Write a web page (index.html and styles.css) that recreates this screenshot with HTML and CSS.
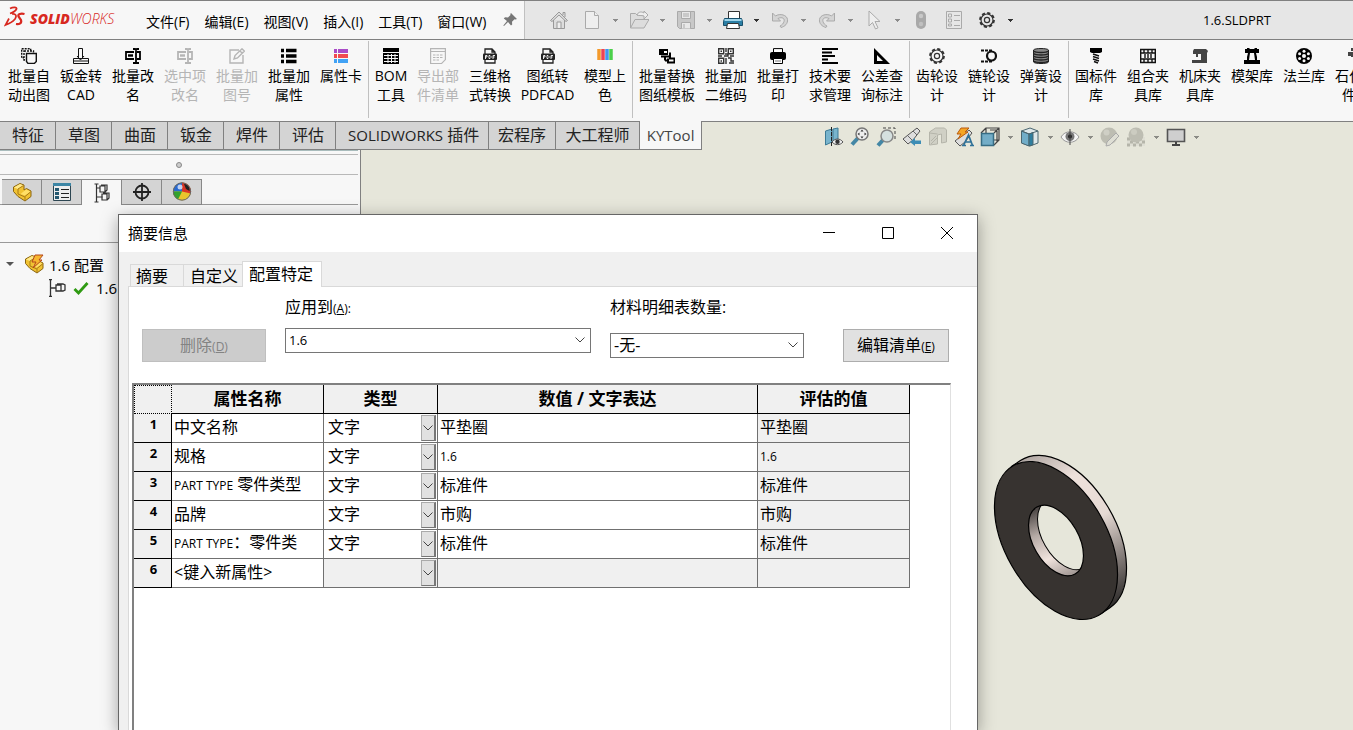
FILE: index.html
```html
<!DOCTYPE html>
<html lang="zh-CN">
  <head>
    <meta charset="UTF-8" />
    <meta name="viewport" content="width=device-width, initial-scale=1.0" />
    <title>1.6.SLDPRT</title>
    <link rel="stylesheet" href="styles.css">
  </head>
  <body>
    <svg class="sprite" aria-hidden="true">
      <symbol id="chevron" viewBox="0 0 10 6"><path d="M.5.5 5 5 9.5.5" fill="none" stroke="#444" /></symbol>
      <symbol id="rename" viewBox="0 0 16 16">
        <path d="M9 4H1v7h8M12 4h3v7h-3" fill="none" stroke="currentColor" stroke-width="1.8" />
        <path d="M3 7.500h5" stroke="currentColor" stroke-width="2.400" />
        <path d="M8 1h2l1 1 1-1h2M11 1v14M8 15h2l1-1 1 1h2" fill="none" stroke="currentColor" stroke-width="1.800" />
      </symbol>
      <symbol id="pdf" viewBox="0 0 16 16">
        <path d="M3 6V1h7l3 3v2M3 11v4h10v-4M10 1v3h3" fill="none" stroke="#222" stroke-width="1.3" />
        <rect x="1" y="5.500" width="14" height="6.500" rx="1" fill="#222" />
        <path d="M3.500 11V7.500h1.500v1.500H3.500M7 7.500v3h1l1-1v-1l-1-1zM11 11V7.500h2M11 9h1.500" fill="none" stroke="#fff" stroke-width=".9" />
      </symbol>
      <symbol id="gear" viewBox="0 0 16 16">
        <g fill="none" stroke="currentColor">
          <circle cx="8" cy="8" r="6" stroke-width="1.200" />
          <circle cx="8" cy="8" r="7" stroke-width="1.800" stroke-dasharray="3.200 2.298" />
          <circle cx="8" cy="8" r="2.600" stroke-width="1.200" />
        </g>
      </symbol>
      <symbol id="part" viewBox="0 0 20 20">
        <path d="M1.500 5 8 1.500l4 1.500v5l2.500-1.500L19 9v5.500L13 19l-7-4.500-4.500-5z" fill="#f1c232" stroke="#8a6510" />
        <path d="M2 5.500 6 7l5.500-3.500L8 2z" fill="#ffe98a" />
        <path d="M8.500 12 14 7.500l4.500 2-5.500 4z" fill="#ffdf66" />
        <path d="M6 7v5l7 3v3.500M6 7l5.500-3.500M13 14.500l5.500-4.500" fill="none" stroke="#a87b15" />
      </symbol>
    </svg>

    <header class="titlebar">
      <div class="titlebar-left">
        <div class="logo">
          <svg width="22" height="22" viewBox="0 0 22 22" fill="none" stroke="#d8281f" stroke-width="1.700">
            <path d="M6 2.500c3-1.500 7.500-1.500 6.500.5C11.500 5 9 6.500 6 7.500" />
            <path d="M8 8c4-.5 5 2 3 5-2 2.500-5 4.500-9.500 6L5 12.500" />
            <path d="M20.500 8c-3.500-1-7 0-6 2.500l2.500 3.500c1 3-1.500 4.500-5 4" stroke-width="2.200" />
          </svg>
          <span class="logo-text"><b>SOLID</b>WORKS</span>
        </div>
        <nav class="menu">
          <a href="#">文件(F)</a>
          <a href="#">编辑(E)</a>
          <a href="#">视图(V)</a>
          <a href="#">插入(I)</a>
          <a href="#">工具(T)</a>
          <a href="#">窗口(W)</a>
        </nav>
        <svg class="pin" width="14" height="14" viewBox="0 0 14 14"><path d="M8 0l6 6-1.500.5-1-.3-2.500 2.500.2 2.800-1.200 1-3-3.500L1 13l-.7-.6L4 8 .8 5.500 2 4.300l3 .2L7.500 2 7.300 1z" fill="#777" /></svg>
      </div>
      <div class="quick">
        <button class="q" aria-label="主页"><svg width="20" height="20" viewBox="0 0 20 20" fill="#ddd" stroke="#999"><path d="M4.500 10v8.500h11V10M1.500 10.500 10 2l8.500 8.500-1.500 1L10 5 3 11.500zM14 5V2.500h2V7" /><path d="M8 18v-6h4v6" fill="#eee" /></svg></button>
        <button class="q" aria-label="新建"><svg width="20" height="20" viewBox="0 0 20 20" fill="#eee" stroke="#aaa"><path d="M3.500 1.500h9l4 4v13h-13z" /><path d="M12.500 1.500v4h4" /></svg></button>
        <i class="caret pale"></i>
        <button class="q" aria-label="打开"><svg width="20" height="20" viewBox="0 0 20 20" fill="#ddd" stroke="#aaa"><path d="M1.500 18V3.500h5l2 2h7V9" /><path d="M1.500 18 6 9.500h14L15 18z" /><path d="M8 5c1-3 4-4 7-2V1l4 4-4 4V6c-3-1-5 0-7-1z" fill="#eee" /></svg></button>
        <i class="caret pale"></i>
        <button class="q" aria-label="保存"><svg width="20" height="20" viewBox="0 0 20 20" fill="#c8c8c8" stroke="#aaa"><path d="M1.500 1.500h17v17h-15l-2-2z" /><path d="M5.500 1.500h9v7h-9zM5.500 18.500v-6h9v6" fill="#e8e8e8" /><path d="M7 4h6M7 6h6M8 14v4" /></svg></button>
        <i class="caret pale"></i>
        <button class="q" aria-label="打印"><svg width="20" height="20" viewBox="0 0 20 20" stroke="#333"><path d="M5.500 9V1.500h11V9" fill="#fff" /><path d="M1.500 8.500h17l1 3v4h-19v-4z" fill="#2b7fa5" stroke="#174f6b" /><path d="M1.500 9h17v2h-17z" fill="#9ed4ea" stroke="none" /><path d="M4.500 13.500h11l1 5h-13z" fill="#fff" /></svg></button>
        <i class="caret"></i>
        <button class="q" aria-label="撤销"><svg width="20" height="20" viewBox="0 0 20 20" fill="#d4d4d4" stroke="#aaa"><path d="M2.500 3v8h8L8 8.500c4-2 7 0 6 3-.5 2-2 3.500-4 4.500l1 1.500c4-1 7-4 6.500-8C17 5 10 3 5.500 6z" /></svg></button>
        <i class="caret pale"></i>
        <button class="q" aria-label="重做"><svg width="20" height="20" viewBox="0 0 20 20" fill="#d4d4d4" stroke="#aaa"><path d="M17.500 3v8h-8L12 8.500c-4-2-7 0-6 3 .5 2 2 3.500 4 4.500l-1 1.500c-4-1-7-4-6.500-8C3 5 10 3 14.500 6z" /></svg></button>
        <i class="caret pale"></i>
        <button class="q" aria-label="选择"><svg width="20" height="20" viewBox="0 0 20 20" fill="#eee" stroke="#aaa"><path d="M5 1v15l3.500-3.500L11.500 19l2.500-1.200-3-6.300h5z" /></svg></button>
        <i class="caret pale"></i>
        <button class="q" aria-label="重建"><svg width="20" height="20" viewBox="0 0 20 20"><rect x="5" y="1" width="10" height="18" rx="5" fill="#a9a9a9" /><circle cx="10" cy="6" r="2.200" fill="#c8c8c8" /><circle cx="10" cy="14" r="2.200" fill="#c0c0c0" /></svg></button>
        <button class="q" aria-label="文件属性"><svg width="20" height="20" viewBox="0 0 20 20" fill="none" stroke="#aaa"><path d="M2.500 1.500h15v17h-15zM4.500 4h3v3h-3zM4.500 9h3v3h-3zM4.500 14h3v2h-3zM10 5.500h6M10 10.500h6M10 15.500h6" /></svg></button>
        <button class="q" aria-label="选项"><svg class="dark" width="16" height="16"><use href="#gear" /></svg></button>
        <i class="caret"></i>
      </div>
      <div class="doc-name">1.6.SLDPRT</div>
    </header>

    <section class="ribbon">
      <button class="tool"><svg width="16" height="16" viewBox="0 0 16 16" fill="#f7f7f7" stroke="#111" stroke-width="1.400"><path d="M.7.7h9v9h-9z" stroke-dasharray="2 1" /><path d="M3 3h9.500v9H3z" stroke-dasharray="2 1" /><path d="M5.500 5.500h9.800v8l-2 2H7l-1.500-2z" /></svg>批量自<br>动出图</button>
      <button class="tool"><svg width="16" height="16" viewBox="0 0 16 16" fill="none" stroke="#111"><path d="M5.500 10V.5h4V10M.5 10.500h15v5H.5zM0 13h16" /><path d="M4 8l3.500 4L11 8" /></svg>钣金转<br>CAD</button>
      <button class="tool"><svg width="16" height="16"><use href="#rename" /></svg>批量改<br>名</button>
      <button class="tool" disabled><svg width="16" height="16"><use href="#rename" /></svg>选中项<br>改名</button>
      <button class="tool" disabled><svg width="16" height="16" viewBox="0 0 16 16" fill="none" stroke="#b5b5b5" stroke-width="1.400"><path d="M10 2H1v13h13V7" /><path d="M5 11l1-3.500L13 .8l2.300 2.300L8.500 10zM11 3l2 2" /></svg>批量加<br>图号</button>
      <button class="tool"><svg width="16" height="16" viewBox="0 0 16 16" stroke="#000" stroke-width="3.400"><path d="M0 2.500h3M0 8h3M0 13.500h3M5 2.500h10.500M5 8h10.500M5 13.500h10.500" /></svg>批量加<br>属性</button>
      <button class="tool"><svg width="16" height="16" viewBox="0 0 16 16" stroke-width="4"><path d="M1 3h3M5 3h10" stroke="#a94bc8" /><path d="M1 8h3M5 8h10" stroke="#f04a50" /><path d="M1 13h3M5 13h10" stroke="#41a2f5" /></svg>属性卡</button>
      <span class="sep"></span>
      <button class="tool narrow"><svg width="16" height="16" viewBox="0 0 16 16"><path d="M0 0h16v4H0zM0 5h16v11H0z" /><path d="M1 7.500h14M1 10.500h14M1 13.500h14M5 6v9M8.500 6v9M12 6v9" stroke="#f7f7f7" /></svg>BOM<br>工具</button>
      <button class="tool" disabled><svg width="16" height="16" viewBox="0 0 16 16" fill="none" stroke="#b5b5b5" stroke-width="1.200"><path d="M.6.6h14.800v11l-4 4H.6zM.6 3.500h14.800" /><path d="M3 7h10M3 9.500h10M3 12h7" stroke-dasharray="2.500 1" /></svg>导出部<br>件清单</button>
      <button class="tool"><svg width="16" height="16"><use href="#pdf" /></svg>三维格<br>式转换</button>
      <button class="tool wide"><svg width="16" height="16"><use href="#pdf" /></svg>图纸转<br>PDFCAD</button>
      <button class="tool"><svg width="16" height="16" viewBox="0 0 16 16" stroke-width="3.500"><path d="M2 1v11" stroke="#f39a2b" /><path d="M6 1v11" stroke="#ee4353" /><path d="M10 1v11" stroke="#4396ee" /><path d="M14 1v11" stroke="#4bd04a" /></svg>模型上<br>色</button>
      <span class="sep"></span>
      <button class="tool wider"><svg width="16" height="16" viewBox="0 0 16 16"><path d="M0 1h9v6H0z" /><path d="M5 3h3v2H5z" fill="#fff" /><path d="M2 8.500h9v-4M6 12.500h4M6 9v3.500M10 10.500h5.500v4H9v-4" fill="none" stroke="#000" stroke-width="2" /></svg>批量替换<br>图纸模板</button>
      <button class="tool"><svg width="16" height="16" viewBox="0 0 16 16" fill="none" stroke="#333" stroke-width="1.400"><path d="M.7.7h5v5h-5zM10.300.7h5v5h-5zM.7 10.300h5v5h-5z" /><path d="M8 0v4M7 6h3v2H6M0 8h4M12 8h4M8 10v6M10 10h3v3h3M11 15h5M2.500 3.200h1.500M12 3.200h1.500M2.500 13h1.500" /></svg>批量加<br>二维码</button>
      <button class="tool"><svg width="16" height="16" viewBox="0 0 16 16"><path d="M3.500 4V.6h9V4" fill="#fff" stroke="#000" /><rect y="4" width="16" height="8" rx="2" /><path d="M3.500 10.500h9v5h-9z" fill="#fff" stroke="#000" /><path d="M5 13h6" stroke="#777" /></svg>批量打<br>印</button>
      <button class="tool"><svg width="16" height="16" viewBox="0 0 16 16" stroke="#000" stroke-width="1.800"><path d="M0 1h16M0 4.500h10M0 8h13M0 11.500h6M0 15h16" /></svg>技术要<br>求管理</button>
      <button class="tool"><svg width="16" height="16" viewBox="0 0 16 16"><path d="M0 0l16 16H0zM3 7v6h6z" fill-rule="evenodd" /></svg>公差查<br>询标注</button>
      <span class="sep"></span>
      <button class="tool"><svg class="dark" width="16" height="16"><use href="#gear" /></svg>齿轮设<br>计</button>
      <button class="tool"><svg width="16" height="16" viewBox="0 0 16 16" fill="none" stroke="#111"><circle cx="10.500" cy="8" r="4.500" stroke-width="2.200" /><path d="M0 2.500h11M0 13.500h11" stroke-width="1.800" stroke-dasharray="3 1" /></svg>链轮设<br>计</button>
      <button class="tool"><svg width="16" height="16" viewBox="0 0 16 16" fill="#888" stroke="#222"><path d="M.5 2v12c1 2 14 2 15 0V2c-1-2-14-2-15 0z" /><path d="M.5 3c2 2 13 2 15 0M.5 5.500c2 2 13 2 15 0M.5 8c2 2 13 2 15 0M.5 10.500c2 2 13 2 15 0M.5 13c2 2 13 2 15 0" stroke-width="1.300" /></svg>弹簧设<br>计</button>
      <span class="sep"></span>
      <button class="tool"><svg width="16" height="16" viewBox="0 0 16 16"><path d="M2 0h12v4l-2 1H4L2 4z" /><path d="M5 6l6 2M5 8.500l6 2M5 11l6 2M6 13.500l4 1.500" stroke="#111" stroke-width="1.500" /></svg>国标件<br>库</button>
      <button class="tool"><svg width="16" height="16" viewBox="0 0 16 16" fill="none" stroke="#111" stroke-width="1.400"><path d="M.7 1.500h14.600v13H.7zM0 5h16M0 11h16" /><path d="M4 1v4M8 1v4M12 1v4M4 11v4M8 11v4M12 11v4M5 6v4M8 6v4M11 6v4" /></svg>组合夹<br>具库</button>
      <button class="tool"><svg width="16" height="16" viewBox="0 0 16 16" fill="#444"><path d="M2 1h12l2 2-1 2v10H0v-3h9V6H6v3H4V6H1V3z" /></svg>机床夹<br>具库</button>
      <button class="tool"><svg width="16" height="16" viewBox="0 0 16 16"><path d="M3 0h2l1 1h4l1-1h2v1h2v4h-3l1 4v3h3v4H0v-4h3V9l1-4H1V1h2z" /><path d="M6 5h4l1 7H5z" fill="#f7f7f7" /></svg>模架库</button>
      <button class="tool"><svg width="16" height="16" viewBox="0 0 16 16"><circle cx="8" cy="8" r="8" /><g fill="#f7f7f7"><circle cx="8" cy="8" r="2" /><circle cx="8" cy="3.200" r="1.500" /><circle cx="8" cy="12.800" r="1.500" /><circle cx="3.600" cy="5.800" r="1.500" /><circle cx="12.400" cy="5.800" r="1.500" /><circle cx="3.600" cy="10.500" r="1.500" /><circle cx="12.400" cy="10.500" r="1.500" /></g></svg>法兰库</button>
      <button class="tool"><svg width="16" height="16" viewBox="0 0 16 16" fill="#444"><path d="M3 0h10v3h-3v2h6v7h-4v-3H3v-1H0V4h5V3H3z" /></svg>石化管<br>件库</button>
    </section>

    <div class="tabrow">
      <nav class="tabs">
        <button>特征</button><button>草图</button><button>曲面</button><button>钣金</button><button>焊件</button><button>评估</button><button class="t-solid"><span class="latin">SOLIDWORKS</span> 插件</button><button class="t-macro">宏程序</button><button class="t-master">大工程师</button><button class="active">KYTool</button>
      </nav>
      <div class="headsup">
        <button class="h" aria-label="剖面显示"><svg width="20" height="20" viewBox="0 0 20 20"><path d="M1.500 4 8 2v13l-6.500 3zM9 2l5-1v12l-5 3z" fill="#78b4cd" stroke="#3d7b96" /><path d="M7.500 0v20" stroke="#222" stroke-dasharray="4 1" /><path d="M8 15c3-4 8-4 11 0-3 3.500-8 3.500-11 0z" fill="#eee" stroke="#555" /><circle cx="13.500" cy="14.800" r="2.200" fill="#333" /></svg></button>
        <button class="h" aria-label="整屏显示全图"><svg width="20" height="20" viewBox="0 0 20 20"><path d="M8 11l-6 6.500" stroke="#4487a5" stroke-width="4" /><circle cx="12" cy="7" r="6" fill="#eee" stroke="#777" stroke-width="1.500" /><path d="M12 2.500l1.500 2h-3zM12 11.500l1.500-2h-3zM7.500 7l2-1.500v3zM16.500 7l-2-1.500v3z" fill="#333" /></svg></button>
        <button class="h" aria-label="局部放大"><svg width="20" height="20" viewBox="0 0 20 20"><path d="M7 1h12v12" fill="none" stroke="#444" stroke-dasharray="3 2" /><path d="M7 13l-5 5.500" stroke="#4487a5" stroke-width="4" /><circle cx="11" cy="9" r="6" fill="#d5e0df" stroke="#888" stroke-width="1.500" /></svg></button>
        <button class="h" aria-label="上一视图"><svg width="20" height="20" viewBox="0 0 20 20"><path d="M1 12l5-4L15 1l3 3-7 9-5 4z" fill="#ddd" stroke="#555" /><path d="M5 8l5 5M11 4l4 4" stroke="#666" /><path d="M8 15l5-4v2.500h6v3.500h-6v2z" fill="#3d8db5" /></svg></button>
        <button class="h" aria-label="剖面视图"><svg width="20" height="20" viewBox="0 0 20 20" fill="#d0d0c5" stroke="#b5b5aa"><path d="M1.500 5l6-4h9l2 2v12l-5 1V7l-4 1v9l-8 1z" /><path d="M1.500 6l8 1M3 14l5-5M3 17l6-6" /></svg></button>
        <button class="h" aria-label="动态注解视图"><svg width="20" height="20" viewBox="0 0 20 20"><path d="M1 14l5-4 9-7 3 3-7 9-5 4z" fill="#ddd" stroke="#555" /><path d="M7 1h8l-4 4h3L4 12l3-5H3z" fill="#f5a524" stroke="#b95b10" /><path d="M9.500 18.500 14.500 8l4 10.500M11 15h6M8 18.500h4M16 18.500h4" fill="none" stroke="#2f7198" stroke-width="1.700" /></svg></button>
        <button class="h" aria-label="视图定向"><svg width="20" height="20" viewBox="0 0 20 20"><path d="M6 6V1h13v12h-5M1 6l5-5M14 6l5-5M14 18l5-5M10 3h7M17 4v11" fill="none" stroke="#444" stroke-width="1.200" /><path d="M1.500 6.500h12v12h-12z" fill="#73adc7" stroke="#376d84" stroke-width="1.500" /></svg></button>
        <i class="caret mid"></i>
        <button class="h" aria-label="显示样式"><svg width="20" height="20" viewBox="0 0 20 20" stroke="#4a6670"><path d="M1.500 4 10 1l8 3v12l-8 3-8.500-3z" fill="#dfe8ea" /><path d="M1.500 4 9 7v12l-7.500-3z" fill="#71adc8" /><path d="M9 7l4-1.500v12.300L9 19z" fill="#2f7f9f" /><path d="M1.500 4 9 7l9-3" fill="none" /></svg></button>
        <i class="caret mid"></i>
        <button class="h" aria-label="隐藏项目"><svg width="20" height="20" viewBox="0 0 20 20"><path d="M1 10c4-7 14-7 18 0-4 7-14 7-18 0z" fill="#f5f5f5" stroke="#999" /><circle cx="10" cy="9.500" r="4.500" fill="#777" /><circle cx="10" cy="9.500" r="2" fill="#222" /><path d="M10 2v16" stroke="#444" /></svg></button>
        <i class="caret mid"></i>
        <button class="h" aria-label="编辑外观"><svg width="20" height="20" viewBox="0 0 20 20"><circle cx="9" cy="9" r="8.500" fill="#bdbdb2" /><circle cx="6.500" cy="5.500" r="3" fill="#cfcfc5" /><path d="M7 15l9-9 3 3-9 9-4 1z" fill="#deded4" stroke="#aaa" /></svg></button>
        <button class="h" aria-label="应用布景"><svg width="20" height="20" viewBox="0 0 20 20"><path d="M1 10h18v9H1z" fill="#deded4" /><path d="M1 12h18M4 15h15M1 18h18" stroke="#b5b5aa" stroke-width="3" stroke-dasharray="3 3" /><circle cx="10" cy="8" r="7.500" fill="#bdbdb2" /><circle cx="8" cy="5" r="3" fill="#ccccc1" /></svg></button>
        <i class="caret mid"></i>
        <button class="h" aria-label="视图设定"><svg width="20" height="20" viewBox="0 0 20 20"><path d="M1.500 2.500h17v12h-17z" fill="#cfcfcf" stroke="#555" stroke-width="1.600" /><path d="M10 15v3M6 18h8" stroke="#444" stroke-width="2" /></svg></button>
        <i class="caret mid"></i>
      </div>
    </div>

    <main class="workspace">
      <aside class="side">
        <div class="side-strip"></div>
        <div class="side-grip"><i></i></div>
        <div class="side-tabs">
          <button aria-label="设计树"><svg width="20" height="20"><use href="#part" /></svg></button>
          <button aria-label="属性管理"><svg width="20" height="20" viewBox="0 0 20 20"><path d="M1.500 1.500h17v17h-17z" fill="#eee" stroke="#2d4652" /><path d="M1 1h18v3H1z" fill="#3d86a5" /><path d="M9 7.500h8M9 11.500h8M9 15.500h8" stroke="#222" /><path d="M3 6h4v3H3zM3 10h4v3H3zM3 14h4v3H3z" fill="#24586f" /></svg></button>
          <button class="active" aria-label="配置管理"><svg width="20" height="20" viewBox="0 0 20 20" fill="none" stroke="#333" stroke-width="1.200"><path d="M4.500 1v18M2.500 1h4M2.500 19h4M4.500 5H8M4.500 14h6" /><path d="M8 3h5v6H8zM9 2h6v5l-2 2M10 11h5v6h-5zM11 10h6v5l-2 2" /></svg></button>
          <button aria-label="尺寸管理"><svg width="20" height="20" viewBox="0 0 20 20" fill="none" stroke="#222" stroke-width="1.800"><circle cx="10" cy="10" r="6.500" /><path d="M10 1v18M1 10h18" /></svg></button>
          <button aria-label="外观管理"><svg width="20" height="20" viewBox="0 0 20 20"><circle cx="10" cy="9.500" r="9" fill="#e9c52d" /><path d="M10 9.500 10 .5A9 9 0 0 0 1 9.500z" fill="#286ad2" /><path d="M1 9.500h9L6 17.500A9 9 0 0 1 1 9.500z" fill="#33a22d" /><path d="M10 .5a9 9 0 0 1 8.800 11L10 9.500z" fill="#d83426" /><path d="M12 2c4 0 6 3 5.500 7L14 7z" fill="#222" /><circle cx="8" cy="5" r="2.500" fill="#fff" opacity=".7" /><circle cx="10" cy="9.500" r="8.700" fill="none" stroke="#666" /></svg></button>
        </div>
        <div class="side-blank"></div>
        <ul class="tree">
          <li><i class="caret tree-caret"></i><svg width="20" height="20" viewBox="0 0 20 20"><use href="#part" /><path d="M11 1h8l-4 5h3l-9 8 3-6H8z" fill="#f7b62f" stroke="#b4471b" /></svg>1.6 配置</li>
          <li class="child"><svg width="18" height="18" viewBox="0 0 18 18" fill="none" stroke="#333" stroke-width="1.300"><path d="M2.500 0v18M1 .6h3M1 17.400h3M2.500 9H8M8 6h5v6H8zM9 5h6l2 1v5l-2 1h-2" /></svg><svg width="16" height="16" viewBox="0 0 16 16"><path d="M1.500 9 5.500 13 14.500 3" fill="none" stroke="#2f9a12" stroke-width="2.800" /></svg>1.6</li>
        </ul>
      </aside>
      <div class="viewport">
        <svg class="washer" width="145" height="175" viewBox="990 450 145 175">
          <defs>
            <linearGradient id="rim" x1="1015" y1="455" x2="1115" y2="620" gradientUnits="userSpaceOnUse">
              <stop offset="0" stop-color="#a59d99" /><stop offset=".25" stop-color="#eee1db" /><stop offset=".5" stop-color="#e6dad4" /><stop offset=".8" stop-color="#696360" /><stop offset="1" stop-color="#111" />
            </linearGradient>
            <linearGradient id="bore" x1="1040" y1="505" x2="1070" y2="575" gradientUnits="userSpaceOnUse">
              <stop offset="0" stop-color="#443f3d" /><stop offset=".35" stop-color="#b5aaa5" /><stop offset=".7" stop-color="#f0e3dd" /><stop offset="1" stop-color="#a59b97" />
            </linearGradient>
            <clipPath id="hole"><ellipse cx="1056" cy="540.500" rx="38.500" ry="22.700" transform="rotate(60.200 1056 540.500)" /></clipPath>
          </defs>
          <path d="M1011.400 466.500l9-6A86.200 50.900 60.200 0 1 1109.600 608l-9 6z" fill="url(#rim)" stroke="#000" stroke-width="1.200" />
          <ellipse cx="1056" cy="540.500" rx="86.200" ry="50.900" transform="rotate(60.200 1056 540.500)" fill="#373330" stroke="#000" stroke-width="1.200" />
          <g clip-path="url(#hole)">
            <path d="M1020 500h70v80h-70z" fill="url(#bore)" />
            <ellipse cx="1065" cy="534.500" rx="38.500" ry="22.700" transform="rotate(60.200 1065 534.500)" fill="#e6e6da" stroke="#000" />
          </g>
          <ellipse cx="1056" cy="540.500" rx="38.500" ry="22.700" transform="rotate(60.200 1056 540.500)" fill="none" stroke="#000" stroke-width="1.200" />
        </svg>
      </div>
    </main>

    <div class="dialog" role="dialog" aria-labelledby="dialogTitle">
      <div class="dialog-title">
        <span id="dialogTitle">摘要信息</span>
        <div class="window-buttons">
          <button aria-label="最小化"><svg width="12" height="12" viewBox="0 0 12 12"><path d="M0 5.500h12" stroke="#000" /></svg></button>
          <button aria-label="最大化"><svg width="12" height="12" viewBox="0 0 12 12"><path d="M.5.5h11v11H.5z" fill="none" stroke="#000" /></svg></button>
          <button aria-label="关闭"><svg width="12" height="12" viewBox="0 0 12 12"><path d="M0 0l12 12M12 0 0 12" stroke="#000" /></svg></button>
        </div>
      </div>
      <div class="dialog-tabs">
        <button>摘要</button>
        <button class="custom">自定义</button>
        <button class="active">配置特定</button>
      </div>
      <div class="page">
        <form class="options">
          <button type="button" class="btn delete" disabled>删除<small>(<u>D</u>)</small></button>
          <div class="field apply">
            <label for="applyTo">应用到<small>(<u>A</u>):</small></label>
            <div class="combo small"><select id="applyTo"><option>1.6</option></select><svg class="chev" width="10" height="6"><use href="#chevron" /></svg></div>
          </div>
          <div class="field qty">
            <label for="bomQty">材料明细表数量:</label>
            <div class="combo"><select id="bomQty"><option>-无-</option></select><svg class="chev" width="10" height="6"><use href="#chevron" /></svg></div>
          </div>
          <button type="button" class="btn edit">编辑清单<small>(<u>E</u>)</small></button>
        </form>
        <div class="grid">
          <table>
            <colgroup><col class="c-num"><col class="c-name"><col class="c-type"><col class="c-value"><col class="c-eval"></colgroup>
            <thead>
              <tr><th class="corner"></th><th>属性名称</th><th>类型</th><th>数值 / 文字表达</th><th>评估的值</th></tr>
            </thead>
            <tbody>
              <tr><th>1</th><td>中文名称</td><td class="type"><select aria-label="类型 1"><option>文字</option></select><span class="drop"><svg width="10" height="6"><use href="#chevron" /></svg></span></td><td>平垫圈</td><td class="eval">平垫圈</td></tr>
              <tr><th>2</th><td>规格</td><td class="type"><select aria-label="类型 2"><option>文字</option></select><span class="drop"><svg width="10" height="6"><use href="#chevron" /></svg></span></td><td><small>1.6</small></td><td class="eval"><small>1.6</small></td></tr>
              <tr><th>3</th><td><small>PART TYPE</small> 零件类型</td><td class="type"><select aria-label="类型 3"><option>文字</option></select><span class="drop"><svg width="10" height="6"><use href="#chevron" /></svg></span></td><td>标准件</td><td class="eval">标准件</td></tr>
              <tr><th>4</th><td>品牌</td><td class="type"><select aria-label="类型 4"><option>文字</option></select><span class="drop"><svg width="10" height="6"><use href="#chevron" /></svg></span></td><td>市购</td><td class="eval">市购</td></tr>
              <tr><th>5</th><td><small>PART TYPE</small>：零件类</td><td class="type"><select aria-label="类型 5"><option>文字</option></select><span class="drop"><svg width="10" height="6"><use href="#chevron" /></svg></span></td><td>标准件</td><td class="eval">标准件</td></tr>
              <tr class="new"><th>6</th><td>&lt;键入新属性&gt;</td><td class="type"><select aria-label="类型 6"><option></option></select><span class="drop"><svg width="10" height="6"><use href="#chevron" /></svg></span></td><td></td><td class="eval"></td></tr>
            </tbody>
          </table>
        </div>
      </div>
    </div>
  </body>
</html>
```
FILE: styles.css
```css
* {
  box-sizing: border-box;
}

body {
  margin: 0;
  height: 100vh;
  display: flex;
  flex-direction: column;
  overflow: hidden;
  position: relative;
  background: #e6e6da;
  color: #000;
  font-family: "Open Sans", "Noto Sans CJK SC", sans-serif;
  font-size: 14px;
}

button,
select {
  margin: 0;
  padding: 0;
  border: none;
  border-radius: 0;
  background: none;
  color: inherit;
  font: inherit;
}

a {
  color: inherit;
  text-decoration: none;
}

svg {
  display: block;
  flex: none;
}

small {
  font-size: 12px;
}

.sprite {
  position: absolute;
  width: 0;
  height: 0;
}

.dark {
  color: #333;
}

/* title bar */
.titlebar {
  display: flex;
  flex: none;
  height: 40px;
  border-top: 1px solid #808080;
  border-bottom: 1px solid #808080;
  background: #e6e6e6;
}

.titlebar-left {
  display: flex;
  align-items: center;
  flex: none;
  width: 525px;
  padding-left: 4px;
  border-right: 1px solid #c0c0c0;
  background: #f7f7f7;
}

.logo {
  display: flex;
  align-items: center;
  gap: 4px;
  width: 142px;
  padding-bottom: 6px;
  color: #d8281f;
}

.logo-text {
  font-size: 14px;
  font-style: italic;
  font-weight: 300;
  line-height: 16px;
  padding-top: 4px;
}

.logo-text b {
  font-weight: 800;
}

.menu {
  display: flex;
  gap: 15px;
  line-height: 20px;
  padding-top: 3px;
}

.pin {
  margin-left: 17px;
}

.quick {
  display: flex;
  align-items: center;
  padding-left: 17px;
}

.q,
.h {
  display: flex;
  align-items: center;
  justify-content: center;
  flex: none;
  width: 33px;
  height: 24px;
}

.h {
  width: 26px;
}

.caret {
  flex: none;
  width: 14px;
  height: 3px;
  background: linear-gradient(#333, #333) center top / 5px 1px no-repeat,
    linear-gradient(#333, #333) center 1px / 3px 1px no-repeat,
    linear-gradient(#333, #333) center 2px / 1px 1px no-repeat;
}

.caret.pale,
.caret.mid {
  opacity: 0.5;
}

.doc-name {
  flex: 1;
  padding-left: 104px;
  line-height: 39px;
  font-size: 13px;
  text-align: center;
}

/* ribbon */
.ribbon {
  display: flex;
  flex: none;
  height: 82px;
  padding-left: 3px;
  overflow: hidden;
  border-bottom: 1px solid #808080;
  background: #f7f7f7;
}

.tool {
  display: flow-root;
  flex: none;
  width: 52px;
  padding-top: 8px;
  line-height: 19px;
  text-align: center;
  white-space: nowrap;
  align-self: flex-start;
}

.tool svg {
  margin: 0 auto 2px;
}

.tool:disabled {
  color: #b5b5b5;
}

.tool.narrow {
  width: 42px;
}

.tool.wide {
  width: 63px;
}

.tool.wider {
  width: 66px;
}

.sep {
  flex: none;
  width: 1px;
  margin: 1px 1px 3px;
  background: #c0c0c0;
}

/* command tabs */
.tabrow {
  display: flex;
  justify-content: space-between;
  flex: none;
  height: 28px;
}

.tabs {
  display: flex;
  flex: none;
}

.tabs button {
  padding: 0 11px 2px 12px;
  border-right: 1px solid #808080;
  border-bottom: 1px solid #808080;
  background: #d4d4d4;
  color: #222;
  font-size: 16px;
  line-height: 24px;
  white-space: nowrap;
}

.tabs .t-solid {
  width: 153px;
}

.latin {
  font-size: 15px;
}

.tabs .t-macro {
  width: 67px;
  padding: 0 0 2px;
}

.tabs .t-master {
  width: 84px;
  padding: 0 0 2px;
}

.tabs .active {
  width: 62px;
  margin-top: -1px;
  padding: 0;
  background: #f7f7f7;
  color: #444;
  font-size: 15px;
}

.headsup {
  display: flex;
  align-items: center;
  padding: 2px 150px 0 0;
}

/* side panel */
.workspace {
  display: flex;
  flex: 1;
  min-height: 0;
}

.side {
  flex: none;
  width: 361px;
  padding-right: 2px;
  border-right: 1px solid #808080;
  background: #f7f7f7;
}

.side-strip {
  height: 5px;
  border-bottom: 1px solid #b8b8b8;
  border-top: 1px solid #a9bcbc;
}

.side-grip {
  display: flex;
  align-items: center;
  justify-content: center;
  height: 20px;
  border-bottom: 1px solid #b8b8b8;
}

.side-grip i {
  width: 6px;
  height: 6px;
  border: 1px solid #888;
  border-radius: 50%;
  background: #ccc;
}

.side-tabs {
  display: flex;
  height: 30px;
  padding: 4px 0 0 2px;
  border-bottom: 1px solid #999;
}

.side-tabs button {
  display: flex;
  align-items: center;
  justify-content: center;
  width: 40px;
  height: 26px;
  border: 1px solid #888;
  border-left: none;
  background: #d4d4d4;
}

.side-tabs .active {
  border-bottom: none;
  background: #f7f7f7;
}

.side-blank {
  height: 38px;
  margin-right: -2px;
  border-bottom: 1px solid #999;
}

.tree {
  margin: 0;
  padding: 9px 0 0 3px;
  list-style: none;
  font-size: 15px;
}

.tree li {
  display: flex;
  align-items: center;
  gap: 5px;
  height: 24px;
}

.tree li.child {
  gap: 7px;
  padding-left: 45px;
}

.tree-caret {
  width: 16px;
  height: 4px;
  background: #555;
  clip-path: polygon(3px 0, 11px 0, 7px 4px);
}

.viewport {
  flex: 1;
  position: relative;
}

.washer {
  position: absolute;
  left: 629px;
  top: 300px;
}

/* summary dialog */
.dialog {
  position: absolute;
  left: 118px;
  top: 214px;
  bottom: 0;
  width: 860px;
  display: flex;
  flex-direction: column;
  border: 1px solid #666;
  border-bottom: none;
  background: #f0f0f0;
  box-shadow: 0 4px 16px rgba(0, 0, 0, 0.35);
}

.dialog-title {
  display: flex;
  align-items: center;
  justify-content: space-between;
  flex: none;
  height: 37px;
  padding: 0 1px 2px 9px;
  background: #fff;
  font-size: 15px;
}

.window-buttons {
  display: flex;
  height: 100%;
}

.window-buttons button {
  display: flex;
  align-items: center;
  justify-content: center;
  width: 59px;
}

.dialog-tabs {
  display: flex;
  align-items: flex-end;
  flex: none;
  height: 34px;
  padding-left: 11px;
  font-size: 16px;
  line-height: 22px;
}

.dialog-tabs button {
  height: 22px;
  width: 54px;
  padding: 0 0 0 5px;
  border: 1px solid #d9d9d9;
  border-bottom: none;
  text-align: left;
}

.dialog-tabs .custom {
  width: 60px;
  border-left: none;
  padding-left: 6px;
}

.dialog-tabs .active {
  position: relative;
  z-index: 1;
  width: 80px;
  height: 26px;
  margin: 0 0 -1px -2px;
  padding: 0 0 2px 6px;
  background: #fff;
}

.page {
  display: flex;
  flex-direction: column;
  flex: 1;
  margin-left: 9px;
  border-left: 1px solid #d9d9d9;
  border-top: 1px solid #d9d9d9;
  background: #fff;
}

.options {
  display: flex;
  align-items: flex-start;
  flex: none;
  gap: 19px;
  height: 96px;
  padding: 8px 0 0 13px;
  font-size: 16px;
}

.btn {
  height: 33px;
  margin-top: 34px;
  border: 1px solid #adadad;
  background: #e1e1e1;
  line-height: 30px;
}

.delete {
  width: 124px;
  border-color: #bfbfbf;
  background: #ccc;
  color: #838383;
}

.edit {
  width: 106px;
  margin-left: 20px;
}

.field label {
  display: block;
  height: 24px;
  line-height: 24px;
  margin-bottom: 9px;
}

.apply {
  width: 306px;
}

.qty {
  width: 194px;
}

.field.qty label {
  margin-bottom: 14px;
}

.combo {
  position: relative;
}

.combo select {
  display: block;
  appearance: none;
  width: 100%;
  height: 25px;
  padding: 0 0 2px 3px;
  border: 1px solid #767676;
  background: #fff;
}

.combo.small select {
  font-size: 13px;
}

.chev {
  position: absolute;
  right: 6px;
  top: 9px;
  pointer-events: none;
}

.grid {
  flex: 1;
  margin: 0 26px 0 3px;
  border: 2px solid #808080;
  border-right: 1px solid #e0e0e0;
  border-bottom: none;
}

table {
  width: 776px;
  table-layout: fixed;
  border-collapse: separate;
  border-spacing: 0;
  font-size: 16px;
  line-height: 20px;
}

.c-num {
  width: 38px;
}

.c-name,
.c-eval {
  width: 152px;
}

.c-type {
  width: 114px;
}

.c-value {
  width: 320px;
}

th,
td {
  height: 29px;
  padding: 0 2px 2px;
  border-right: 1px solid #707070;
  border-bottom: 1px solid #707070;
  text-align: left;
  white-space: nowrap;
}

th {
  border-color: #000;
  background: #f0f0f0;
  text-align: center;
}

thead th {
  padding-bottom: 1px;
  font-size: 17px;
}

.corner {
  border: 1px dotted #000;
}

tbody th {
  padding: 0 1px 8px 3px;
  font-size: 13px;
  line-height: 18px;
}

.type {
  position: relative;
  padding: 0;
}

.type select {
  display: block;
  appearance: none;
  width: 100%;
  height: 28px;
  padding: 0 0 2px 4px;
}

.drop {
  position: absolute;
  right: 1px;
  top: 1px;
  display: flex;
  align-items: center;
  justify-content: center;
  width: 15px;
  height: 26px;
  border: 1px solid #aaa;
  border-right: 2px solid #777;
  border-bottom-color: #777;
  background: #e1e1e1;
  pointer-events: none;
}

.eval,
.new td:not(:nth-child(2)) {
  background: #f0f0f0;
}
```
